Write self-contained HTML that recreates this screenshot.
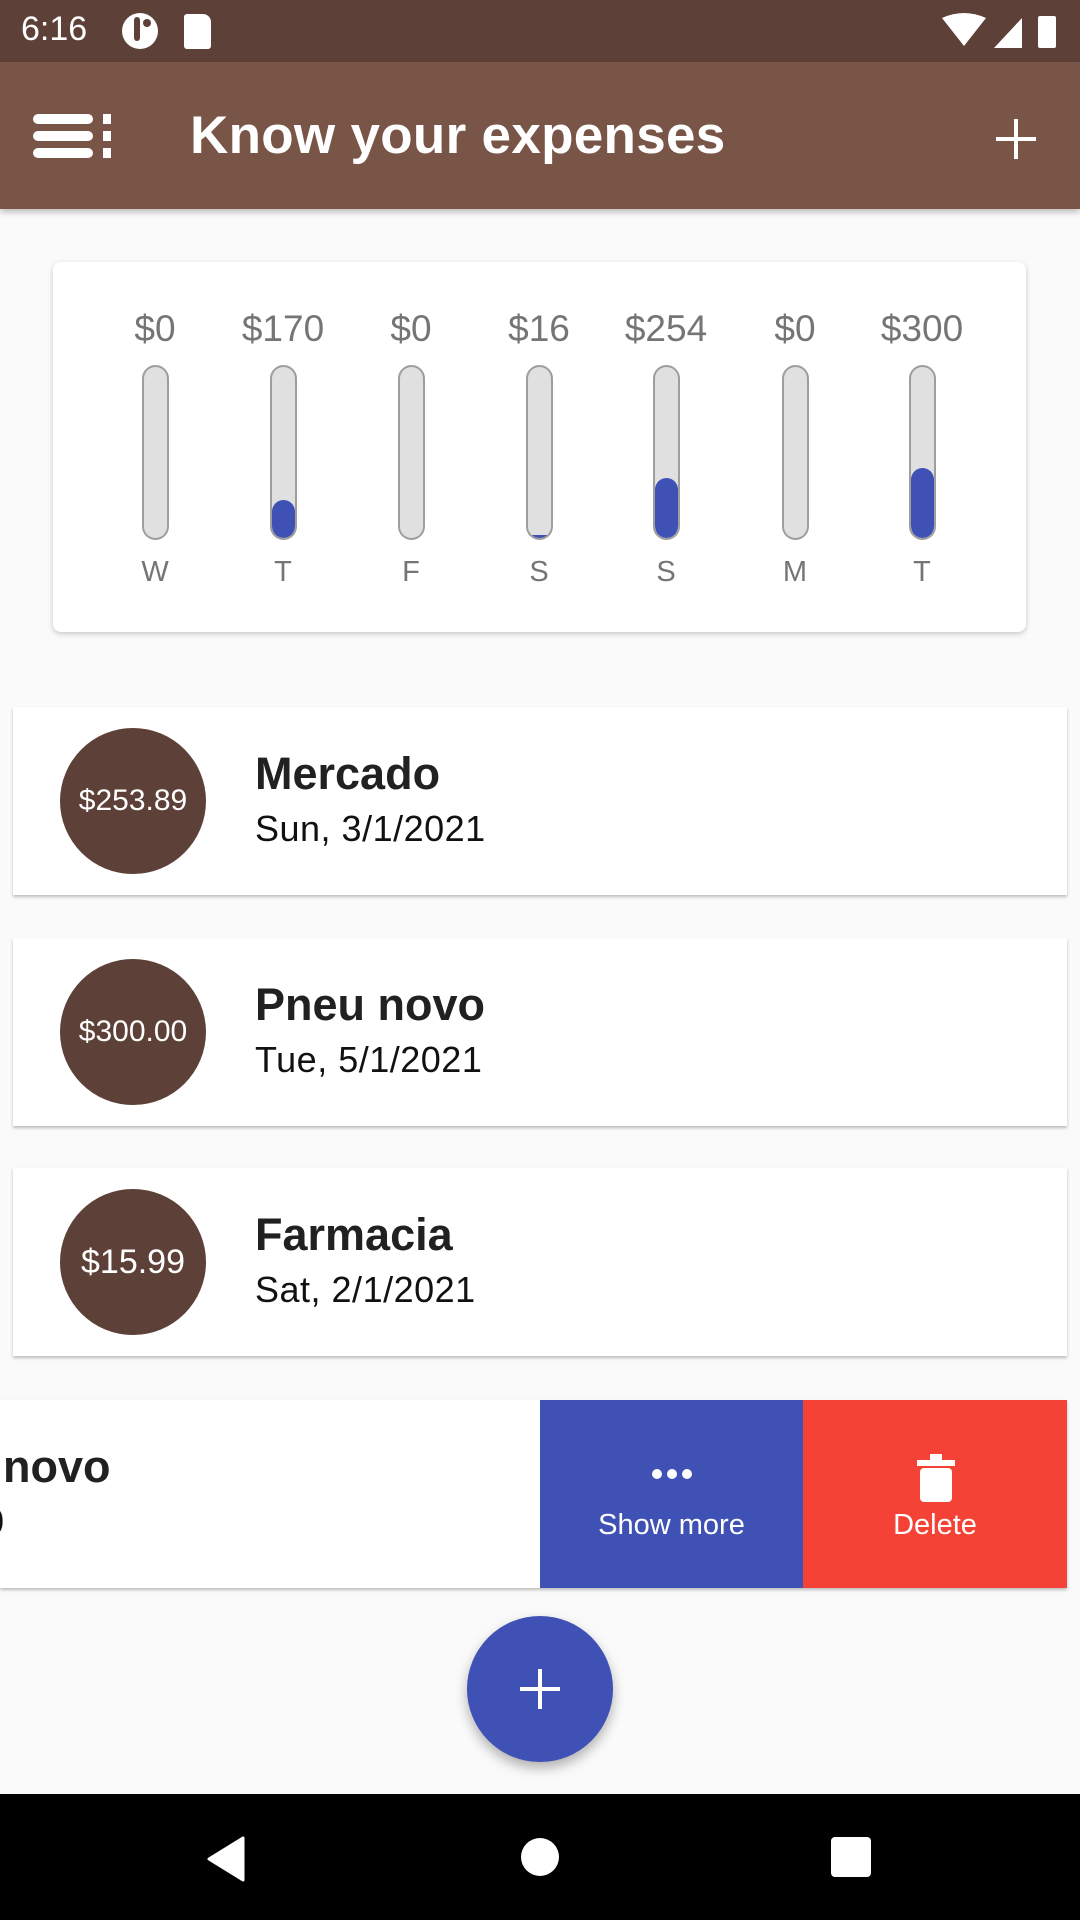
<!DOCTYPE html>
<html><head><meta charset="utf-8"><style>
*{margin:0;padding:0;box-sizing:border-box}
body{width:1080px;height:1920px;background:#fafafa;position:relative;overflow:hidden;font-family:"Liberation Sans",sans-serif}
.abs{position:absolute}
.status{left:0;top:0;width:1080px;height:62px;background:#5d4037;color:#fff}
.appbar{left:0;top:62px;width:1080px;height:147px;background:#795548;box-shadow:0 3px 6px rgba(0,0,0,.25)}
.title{left:190px;top:104px;color:#fff;font-size:53px;font-weight:bold;line-height:64px;letter-spacing:0.3px}
.card{left:53px;top:262px;width:973px;height:370px;background:#fff;border-radius:8px;box-shadow:0 2px 6px rgba(0,0,0,.2)}
.col{position:absolute;width:120px;margin-left:-60px;text-align:center;color:#757575}
.amt{top:306px;font-size:37px;line-height:46px}
.day{top:554px;font-size:29px;line-height:36px}
.bar{position:absolute;top:365px;width:27px;margin-left:-13.5px;height:175px;background:#e0e0e0;border:2.5px solid #9e9e9e;border-radius:14px;overflow:hidden}
.fill{position:absolute;left:0;right:0;bottom:0;background:#3f51b5;border-radius:12px}
.item{left:13px;width:1054px;height:188px;background:#fff;box-shadow:0 2px 3px rgba(0,0,0,.25)}
.circ{position:absolute;left:47px;top:21px;width:146px;height:146px;border-radius:50%;background:#5d4037;color:#fff;font-size:30px;display:flex;align-items:center;justify-content:center}
.name{position:absolute;left:242px;top:41px;font-size:45px;font-weight:bold;color:#212121}
.date{position:absolute;left:242px;top:101px;font-size:36px;color:#111;letter-spacing:0.5px}
</style></head><body>
<div class="abs status">
 <div class="abs" style="left:21px;top:10px;font-size:34px">6:16</div>
 <div class="abs" style="left:122px;top:13px;width:36px;height:36px;border-radius:50%;background:#fff"></div>
 <div class="abs" style="left:134px;top:17px;width:6px;height:24px;background:#5d4037;border-radius:3px"></div>
 <div class="abs" style="left:143px;top:19px;width:8px;height:8px;background:#5d4037;border-radius:50%"></div>
 <div class="abs" style="left:184px;top:14px;width:27px;height:35px;background:#fff;border-radius:3px 8px 3px 3px"></div>
 <svg class="abs" style="left:940px;top:12px" width="120" height="40" viewBox="0 0 120 40"><path d="M2 6 Q24 -4 46 6 L24 34Z" fill="#fff"/><path d="M54 36 L82 6 L82 36Z" fill="#fff"/><rect x="98" y="4" width="18" height="32" rx="2" fill="#fff"/></svg>
</div>
<div class="abs appbar">
 <svg class="abs" style="left:33px;top:50px" width="82" height="48"><rect x="0" y="2" width="60" height="10" rx="5" fill="#fff"/><rect x="0" y="19" width="60" height="10" rx="5" fill="#fff"/><rect x="0" y="36" width="60" height="10" rx="5" fill="#fff"/><rect x="70" y="2" width="8" height="10" fill="#fff"/><rect x="70" y="19" width="8" height="10" fill="#fff"/><rect x="70" y="36" width="8" height="10" fill="#fff"/></svg>
 <svg class="abs" style="left:996px;top:57px" width="40" height="40"><rect x="18" y="0" width="4" height="40" fill="#fff"/><rect x="0" y="18" width="40" height="4" fill="#fff"/></svg>
</div>
<div class="abs title">Know your expenses</div>
<div class="abs card"></div>
<div class="col amt" style="left:155px">$0</div>
<div class="col amt" style="left:283px">$170</div>
<div class="col amt" style="left:411px">$0</div>
<div class="col amt" style="left:539px">$16</div>
<div class="col amt" style="left:666px">$254</div>
<div class="col amt" style="left:795px">$0</div>
<div class="col amt" style="left:922px">$300</div>
<div class="bar" style="left:155px"></div>
<div class="bar" style="left:283px"><div class="fill" style="height:38px"></div></div>
<div class="bar" style="left:411px"></div>
<div class="bar" style="left:539px"><div class="fill" style="height:3px;border-radius:0"></div></div>
<div class="bar" style="left:666px"><div class="fill" style="height:60px"></div></div>
<div class="bar" style="left:795px"></div>
<div class="bar" style="left:922px"><div class="fill" style="height:70px"></div></div>
<div class="col day" style="left:155px">W</div>
<div class="col day" style="left:283px">T</div>
<div class="col day" style="left:411px">F</div>
<div class="col day" style="left:539px">S</div>
<div class="col day" style="left:666px">S</div>
<div class="col day" style="left:795px">M</div>
<div class="col day" style="left:922px">T</div>

<div class="abs item" style="top:707px"><div class="circ">$253.89</div><div class="name">Mercado</div><div class="date">Sun, 3/1/2021</div></div>
<div class="abs item" style="top:938px"><div class="circ">$300.00</div><div class="name">Pneu novo</div><div class="date">Tue, 5/1/2021</div></div>
<div class="abs item" style="top:1168px"><div class="circ" style="font-size:34px">$15.99</div><div class="name">Farmacia</div><div class="date">Sat, 2/1/2021</div></div>
<div class="abs item" style="top:1400px;left:0;width:1067px;overflow:hidden">
 <div class="name" style="left:3px">novo</div><div class="date" style="left:-16px">0</div>
 <div class="abs" style="left:540px;top:0;width:263px;height:188px;background:#3f51b5;color:#fff;text-align:center">
  <svg class="abs" style="left:111px;top:67px" width="42" height="14"><circle cx="6" cy="7" r="5" fill="#fff"/><circle cx="21" cy="7" r="5" fill="#fff"/><circle cx="36" cy="7" r="5" fill="#fff"/></svg>
  <div class="abs" style="left:0;width:263px;top:109px;font-size:29px">Show more</div></div>
 <div class="abs" style="left:803px;top:0;width:264px;height:188px;background:#f44336;color:#fff;text-align:center">
  <svg class="abs" style="left:114px;top:54px" width="38" height="48"><rect x="0" y="6" width="38" height="6" fill="#fff"/><rect x="13" y="0" width="12" height="6" fill="#fff"/><rect x="3" y="14" width="32" height="34" rx="4" fill="#fff"/></svg>
  <div class="abs" style="left:0;width:264px;top:109px;font-size:29px">Delete</div></div>
</div>
<div class="abs" style="left:467px;top:1616px;width:146px;height:146px;border-radius:50%;background:#3f51b5;box-shadow:0 6px 12px rgba(0,0,0,.3)">
 <svg class="abs" style="left:53px;top:53px" width="40" height="40"><rect x="18" y="0" width="4" height="40" fill="#fff"/><rect x="0" y="18" width="40" height="4" fill="#fff"/></svg></div>
<div class="abs" style="left:0;top:1794px;width:1080px;height:126px;background:#000">
 <svg class="abs" style="left:205px;top:42px" width="40" height="46"><path d="M38 2 L38 44 L4 23Z" fill="#fff" stroke="#fff" stroke-width="3" stroke-linejoin="round"/></svg>
 <div class="abs" style="left:521px;top:44px;width:38px;height:38px;border-radius:50%;background:#fff"></div>
 <div class="abs" style="left:831px;top:43px;width:40px;height:40px;border-radius:4px;background:#fff"></div>
</div>
</body></html>
